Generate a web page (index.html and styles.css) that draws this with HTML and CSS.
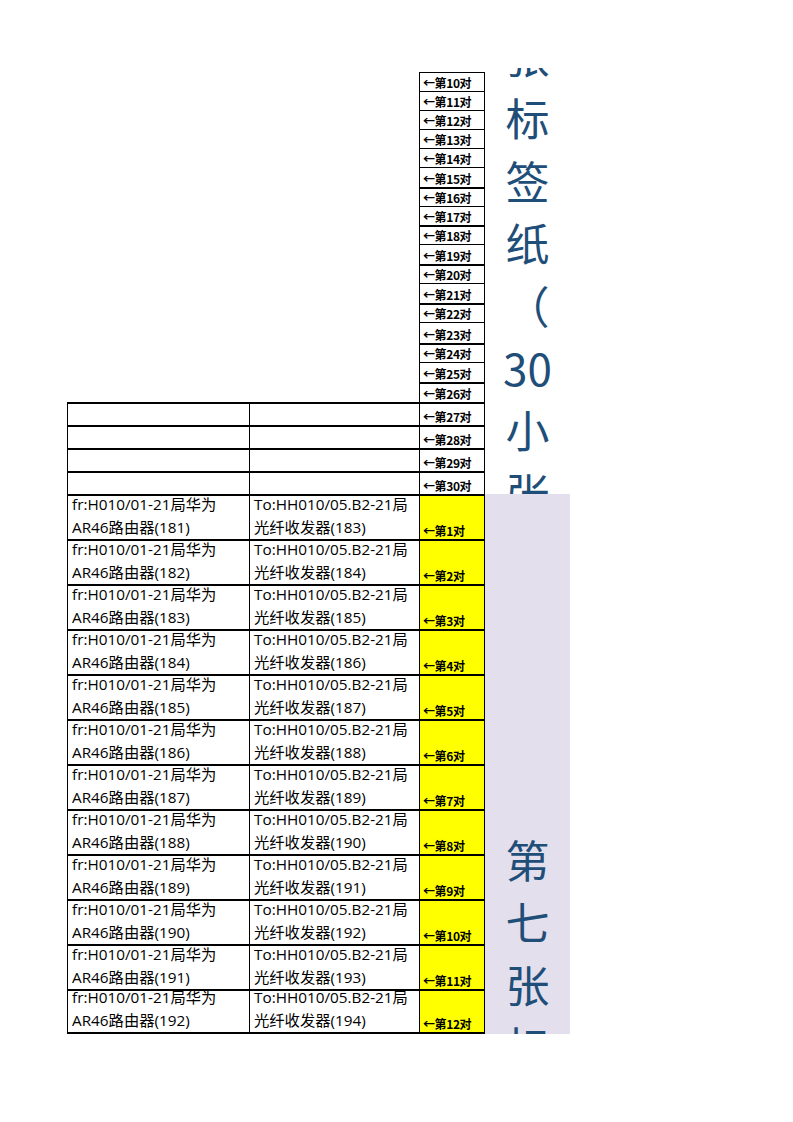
FILE: index.html
```html
<!DOCTYPE html>
<html lang="zh-CN">
<head>
<meta charset="utf-8">
<title>标签纸</title>
<link rel="stylesheet" href="styles.css">
</head>
<body>
<div class="page">
  <div class="sheet">
    <div class="blank"></div>
    <div class="d-top">
      <div class="vtext vtext-top">
        <div>张</div><div>标</div><div>签</div><div>纸</div><div>（</div><div>30</div><div>小</div><div>张</div>
      </div>
    </div>
    <div class="d-bottom">
      <div class="vtext vtext-bottom">
        <div>第</div><div>七</div><div>张</div><div>标</div>
      </div>
    </div>

    <div class="cell lbl thin">←第10对</div>
    <div class="cell lbl thin">←第11对</div>
    <div class="cell lbl thin">←第12对</div>
    <div class="cell lbl thin">←第13对</div>
    <div class="cell lbl thin">←第14对</div>
    <div class="cell lbl thin">←第15对</div>
    <div class="cell lbl">←第16对</div>
    <div class="cell lbl thin">←第17对</div>
    <div class="cell lbl">←第18对</div>
    <div class="cell lbl thin">←第19对</div>
    <div class="cell lbl">←第20对</div>
    <div class="cell lbl thin">←第21对</div>
    <div class="cell lbl">←第22对</div>
    <div class="cell lbl thin">←第23对</div>
    <div class="cell lbl">←第24对</div>
    <div class="cell lbl thin">←第25对</div>
    <div class="cell lbl">←第26对</div>

    <div class="cell"></div><div class="cell"></div><div class="cell lbl">←第27对</div>
    <div class="cell"></div><div class="cell"></div><div class="cell lbl">←第28对</div>
    <div class="cell"></div><div class="cell"></div><div class="cell lbl">←第29对</div>
    <div class="cell"></div><div class="cell"></div><div class="cell lbl">←第30对</div>

    <div class="cell txt">fr:H010/01-21局华为<br>AR46路由器(181)</div>
    <div class="cell txt">To:HH010/05.B2-21局<br>光纤收发器(183)</div>
    <div class="cell lbl yel">←第1对</div>

    <div class="cell txt">fr:H010/01-21局华为<br>AR46路由器(182)</div>
    <div class="cell txt">To:HH010/05.B2-21局<br>光纤收发器(184)</div>
    <div class="cell lbl yel">←第2对</div>

    <div class="cell txt">fr:H010/01-21局华为<br>AR46路由器(183)</div>
    <div class="cell txt">To:HH010/05.B2-21局<br>光纤收发器(185)</div>
    <div class="cell lbl yel">←第3对</div>

    <div class="cell txt">fr:H010/01-21局华为<br>AR46路由器(184)</div>
    <div class="cell txt">To:HH010/05.B2-21局<br>光纤收发器(186)</div>
    <div class="cell lbl yel">←第4对</div>

    <div class="cell txt">fr:H010/01-21局华为<br>AR46路由器(185)</div>
    <div class="cell txt">To:HH010/05.B2-21局<br>光纤收发器(187)</div>
    <div class="cell lbl yel">←第5对</div>

    <div class="cell txt">fr:H010/01-21局华为<br>AR46路由器(186)</div>
    <div class="cell txt">To:HH010/05.B2-21局<br>光纤收发器(188)</div>
    <div class="cell lbl yel">←第6对</div>

    <div class="cell txt">fr:H010/01-21局华为<br>AR46路由器(187)</div>
    <div class="cell txt">To:HH010/05.B2-21局<br>光纤收发器(189)</div>
    <div class="cell lbl yel">←第7对</div>

    <div class="cell txt">fr:H010/01-21局华为<br>AR46路由器(188)</div>
    <div class="cell txt">To:HH010/05.B2-21局<br>光纤收发器(190)</div>
    <div class="cell lbl yel">←第8对</div>

    <div class="cell txt">fr:H010/01-21局华为<br>AR46路由器(189)</div>
    <div class="cell txt">To:HH010/05.B2-21局<br>光纤收发器(191)</div>
    <div class="cell lbl yel">←第9对</div>

    <div class="cell txt">fr:H010/01-21局华为<br>AR46路由器(190)</div>
    <div class="cell txt">To:HH010/05.B2-21局<br>光纤收发器(192)</div>
    <div class="cell lbl yel">←第10对</div>

    <div class="cell txt">fr:H010/01-21局华为<br>AR46路由器(191)</div>
    <div class="cell txt">To:HH010/05.B2-21局<br>光纤收发器(193)</div>
    <div class="cell lbl yel">←第11对</div>

    <div class="cell txt last">fr:H010/01-21局华为<br>AR46路由器(192)</div>
    <div class="cell txt last">To:HH010/05.B2-21局<br>光纤收发器(194)</div>
    <div class="cell lbl yel last">←第12对</div>
  </div>
</div>
</body>
</html>
```

FILE: styles.css
```css
html, body {
  margin: 0;
  padding: 0;
  background: #ffffff;
}

.page {
  padding: 72px 0 0 67px;
}

.sheet {
  display: grid;
  grid-template-columns: 182px 170px 66px 85px;
  grid-template-rows:
    19px 19px 19px 19px 19px 20px 19px 19px 19px 20px 19px 20px 19px 21px 19px 20px 20px
    23px 23px 23px 23px
    repeat(12, 45px);
  font-family: "Open Sans", "Noto Sans CJK SC", sans-serif;
  color: #000;
}

.blank {
  grid-column: 1 / 3;
  grid-row: 1 / 18;
}

.d-top {
  grid-column: 4;
  grid-row: 1 / 22;
  margin-top: -4px;
  overflow: hidden;
  background: #ffffff;
}

.d-bottom {
  grid-column: 4;
  grid-row: 22 / 34;
  overflow: hidden;
  background: #e3dfec;
}

.vtext {
  display: flex;
  flex-direction: column;
  align-items: center;
  font-family: "Noto Sans CJK SC", sans-serif;
  font-size: 44px;
  line-height: 62.4px;
  color: #1f4e79;
}

.vtext-top {
  margin-top: -44px;
}

.vtext-bottom {
  margin-top: 334px;
}

.cell {
  box-sizing: border-box;
  min-width: 0;
  border-left: 1px solid #000;
  border-top: 2px solid #000;
}

.thin {
  border-top-width: 1px;
}

.last {
  border-bottom: 2px solid #000;
}

.lbl {
  border-right: 1px solid #000;
  display: flex;
  align-items: flex-end;
  padding: 0 0 2px 3px;
  font-family: "Noto Sans CJK SC", sans-serif;
  font-weight: 700;
  font-size: 12px;
  line-height: 13px;
  letter-spacing: -0.4px;
  white-space: nowrap;
}

.yel {
  background: #ffff00;
}

.txt {
  display: flex;
  flex-direction: column;
  justify-content: flex-end;
  padding: 0 0 0 4px;
  font-size: 15.3px;
  line-height: 23px;
  white-space: nowrap;
}
```
